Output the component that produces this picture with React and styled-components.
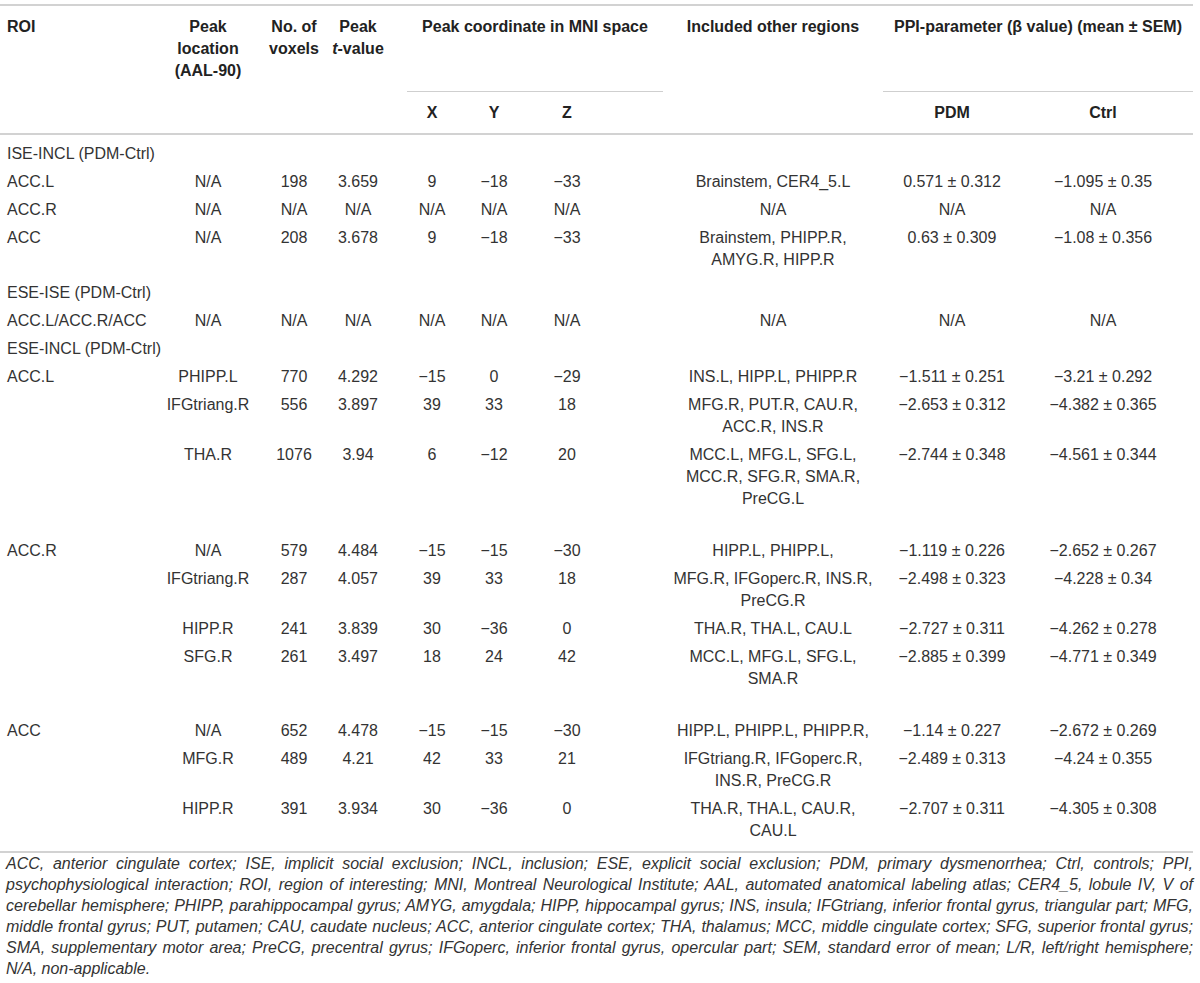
import React from "react";
import styled, { createGlobalStyle } from "styled-components";

const GlobalStyle = createGlobalStyle`
  html, body {
    margin: 0;
    padding: 0;
    background: #fff;
  }
  body {
    font-family: "Liberation Sans", Arial, Helvetica, sans-serif;
  }
`;

const M = "\u2212";

const columns = [150, 116, 56, 72, 76, 48, 152, 206, 152, 165];

const rows = [
  { section: "ISE-INCL (PDM-Ctrl)", gap: 5 },
  { roi: "ACC.L", loc: "N/A", vox: "198", t: "3.659", x: "9", y: `${M}18`, z: `${M}33`, inc: ["Brainstem, CER4_5.L"], pdm: "0.571 ± 0.312", ctrl: `${M}1.095 ± 0.35` },
  { roi: "ACC.R", loc: "N/A", vox: "N/A", t: "N/A", x: "N/A", y: "N/A", z: "N/A", inc: ["N/A"], pdm: "N/A", ctrl: "N/A" },
  { roi: "ACC", loc: "N/A", vox: "208", t: "3.678", x: "9", y: `${M}18`, z: `${M}33`, inc: ["Brainstem, PHIPP.R,", "AMYG.R, HIPP.R"], pdm: "0.63 ± 0.309", ctrl: `${M}1.08 ± 0.356` },
  { section: "ESE-ISE (PDM-Ctrl)", gap: 5 },
  { roi: "ACC.L/ACC.R/ACC", loc: "N/A", vox: "N/A", t: "N/A", x: "N/A", y: "N/A", z: "N/A", inc: ["N/A"], pdm: "N/A", ctrl: "N/A" },
  { section: "ESE-INCL (PDM-Ctrl)" },
  { roi: "ACC.L", loc: "PHIPP.L", vox: "770", t: "4.292", x: `${M}15`, y: "0", z: `${M}29`, inc: ["INS.L, HIPP.L, PHIPP.R"], pdm: `${M}1.511 ± 0.251`, ctrl: `${M}3.21 ± 0.292` },
  { roi: "", loc: "IFGtriang.R", vox: "556", t: "3.897", x: "39", y: "33", z: "18", inc: ["MFG.R, PUT.R, CAU.R,", "ACC.R, INS.R"], pdm: `${M}2.653 ± 0.312`, ctrl: `${M}4.382 ± 0.365` },
  { roi: "", loc: "THA.R", vox: "1076", t: "3.94", x: "6", y: `${M}12`, z: "20", inc: ["MCC.L, MFG.L, SFG.L,", "MCC.R, SFG.R, SMA.R,", "PreCG.L"], pdm: `${M}2.744 ± 0.348`, ctrl: `${M}4.561 ± 0.344` },
  { roi: "ACC.R", loc: "N/A", vox: "579", t: "4.484", x: `${M}15`, y: `${M}15`, z: `${M}30`, inc: ["HIPP.L, PHIPP.L,"], pdm: `${M}1.119 ± 0.226`, ctrl: `${M}2.652 ± 0.267`, gap: 24 },
  { roi: "", loc: "IFGtriang.R", vox: "287", t: "4.057", x: "39", y: "33", z: "18", inc: ["MFG.R, IFGoperc.R, INS.R,", "PreCG.R"], pdm: `${M}2.498 ± 0.323`, ctrl: `${M}4.228 ± 0.34` },
  { roi: "", loc: "HIPP.R", vox: "241", t: "3.839", x: "30", y: `${M}36`, z: "0", inc: ["THA.R, THA.L, CAU.L"], pdm: `${M}2.727 ± 0.311`, ctrl: `${M}4.262 ± 0.278` },
  { roi: "", loc: "SFG.R", vox: "261", t: "3.497", x: "18", y: "24", z: "42", inc: ["MCC.L, MFG.L, SFG.L,", "SMA.R"], pdm: `${M}2.885 ± 0.399`, ctrl: `${M}4.771 ± 0.349` },
  { roi: "ACC", loc: "N/A", vox: "652", t: "4.478", x: `${M}15`, y: `${M}15`, z: `${M}30`, inc: ["HIPP.L, PHIPP.L, PHIPP.R,"], pdm: `${M}1.14 ± 0.227`, ctrl: `${M}2.672 ± 0.269`, gap: 24 },
  { roi: "", loc: "MFG.R", vox: "489", t: "4.21", x: "42", y: "33", z: "21", inc: ["IFGtriang.R, IFGoperc.R,", "INS.R, PreCG.R"], pdm: `${M}2.489 ± 0.313`, ctrl: `${M}4.24 ± 0.355` },
  { roi: "", loc: "HIPP.R", vox: "391", t: "3.934", x: "30", y: `${M}36`, z: "0", inc: ["THA.R, THA.L, CAU.R,", "CAU.L"], pdm: `${M}2.707 ± 0.311`, ctrl: `${M}4.305 ± 0.308` },
];

const footnote =
  "ACC, anterior cingulate cortex; ISE, implicit social exclusion; INCL, inclusion; ESE, explicit social exclusion; PDM, primary dysmenorrhea; Ctrl, controls; PPI, psychophysiological interaction; ROI, region of interesting; MNI, Montreal Neurological Institute; AAL, automated anatomical labeling atlas; CER4_5, lobule IV, V of cerebellar hemisphere; PHIPP, parahippocampal gyrus; AMYG, amygdala; HIPP, hippocampal gyrus; INS, insula; IFGtriang, inferior frontal gyrus, triangular part; MFG, middle frontal gyrus; PUT, putamen; CAU, caudate nucleus; ACC, anterior cingulate cortex; THA, thalamus; MCC, middle cingulate cortex; SFG, superior frontal gyrus; SMA, supplementary motor area; PreCG, precentral gyrus; IFGoperc, inferior frontal gyrus, opercular part; SEM, standard error of mean; L/R, left/right hemisphere; N/A, non-applicable.";

const Page = styled.div`
  width: 1193px;
  padding-top: 4px;
  font-size: 16px;
  line-height: 22px;
  color: #333;
`;

const Table = styled.table`
  width: 1193px;
  table-layout: fixed;
  border-collapse: collapse;
  border-top: 2px solid #d2d2d2;
  border-bottom: 2px solid #d2d2d2;

  thead {
    border-bottom: 2px solid #d2d2d2;
  }
`;

const HeadRow = styled.tr`
  height: ${(p) => p.$h}px;
`;

const HeadCell = styled.th`
  padding: ${(p) => (p.$mid ? "0" : "10px")} ${(p) => p.$padR || 0}px 0
    ${(p) => (p.$left ? 7 : 0)}px;
  vertical-align: ${(p) => (p.$mid ? "middle" : "top")};
  text-align: ${(p) => (p.$left ? "left" : "center")};
  font-weight: bold;
  color: #222;
`;

const GroupHead = styled.th`
  position: relative;
  padding: 10px ${(p) => p.$inR}px 0 ${(p) => p.$inL}px;
  vertical-align: top;
  text-align: center;
  font-weight: bold;
  color: #222;
  white-space: nowrap;

  &::after {
    content: "";
    position: absolute;
    left: ${(p) => p.$inL}px;
    right: ${(p) => p.$inR}px;
    bottom: 0;
    height: 1px;
    background: #cfcfcf;
  }
`;

const Row = styled.tr`
  & > td {
    padding-top: ${(p) => 3 + (p.$gap || 0)}px;
  }
  &:last-child > td {
    padding-bottom: 9px;
  }
`;

const Cell = styled.td`
  padding: 3px ${(p) => p.$padR || 0}px 3px ${(p) => (p.$left ? 7 : 0)}px;
  vertical-align: top;
  text-align: ${(p) => (p.$left ? "left" : "center")};
  white-space: nowrap;
`;

const Line = styled.div`
  white-space: nowrap;
`;

const Note = styled.p`
  margin: 0;
  padding-left: 6px;
  font-style: italic;
  font-size: 16px;
  line-height: 21px;
  text-align: justify;
  color: #333;
`;

export default function App() {
  return (
    <Page>
      <GlobalStyle />
      <Table>
        <colgroup>
          {columns.map((w, i) => (
            <col key={i} style={{ width: w }} />
          ))}
        </colgroup>
        <thead>
          <HeadRow $h={87}>
            <HeadCell rowSpan={2} $left>
              ROI
            </HeadCell>
            <HeadCell rowSpan={2}>
              Peak
              <br />
              location
              <br />
              (AAL-90)
            </HeadCell>
            <HeadCell rowSpan={2}>
              No. of
              <br />
              voxels
            </HeadCell>
            <HeadCell rowSpan={2}>
              Peak
              <br />
              <i>t</i>-value
            </HeadCell>
            <GroupHead colSpan={3} $inL={13} $inR={7}>
              Peak coordinate in MNI space
            </GroupHead>
            <HeadCell rowSpan={2}>Included other regions</HeadCell>
            <GroupHead colSpan={2} $inL={7} $inR={0}>
              PPI-parameter (β value) (mean ± SEM)
            </GroupHead>
          </HeadRow>
          <HeadRow $h={42}>
            <HeadCell $mid>X</HeadCell>
            <HeadCell $mid>Y</HeadCell>
            <HeadCell $mid $padR={54}>
              Z
            </HeadCell>
            <HeadCell $mid>PDM</HeadCell>
            <HeadCell $mid $padR={15}>
              Ctrl
            </HeadCell>
          </HeadRow>
        </thead>
        <tbody>
          {rows.map((r, i) =>
            r.section ? (
              <Row key={i} $gap={r.gap}>
                <Cell colSpan={10} $left>
                  {r.section}
                </Cell>
              </Row>
            ) : (
              <Row key={i} $gap={r.gap}>
                <Cell $left>{r.roi}</Cell>
                <Cell>{r.loc}</Cell>
                <Cell>{r.vox}</Cell>
                <Cell>{r.t}</Cell>
                <Cell>{r.x}</Cell>
                <Cell>{r.y}</Cell>
                <Cell $padR={54}>{r.z}</Cell>
                <Cell>
                  {r.inc.map((l, j) => (
                    <Line key={j}>{l}</Line>
                  ))}
                </Cell>
                <Cell>{r.pdm}</Cell>
                <Cell $padR={15}>{r.ctrl}</Cell>
              </Row>
            )
          )}
        </tbody>
      </Table>
      <Note>{footnote}</Note>
    </Page>
  );
}
